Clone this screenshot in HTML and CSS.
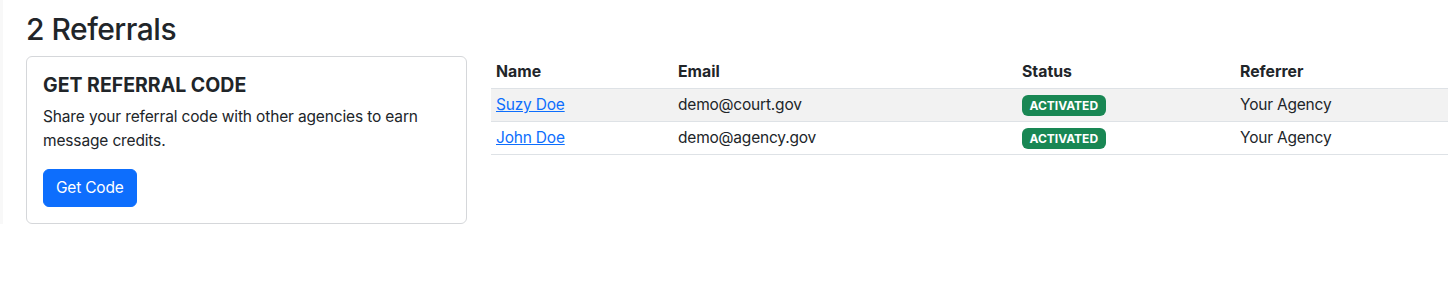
FILE: index.html
```html
<!DOCTYPE html>
<html lang="en">
<head>
<meta charset="utf-8">
<title>Referrals</title>
<link rel="stylesheet" href="styles.css">
</head>
<body>
<div class="page">
  <h2 class="title">2 Referrals</h2>
  <div class="layout">
    <div class="card">
      <h5 class="card-title">GET REFERRAL CODE</h5>
      <p class="card-text">Share your referral code with other agencies to earn message credits.</p>
      <button class="btn" type="button">Get Code</button>
    </div>
    <table class="table">
      <colgroup>
        <col class="c-name"><col class="c-email"><col class="c-status"><col class="c-ref">
      </colgroup>
      <thead>
        <tr><th>Name</th><th>Email</th><th>Status</th><th>Referrer</th></tr>
      </thead>
      <tbody>
        <tr class="striped">
          <td><a href="#">Suzy Doe</a></td>
          <td>demo@court.gov</td>
          <td><span class="badge">ACTIVATED</span></td>
          <td>Your Agency</td>
        </tr>
        <tr>
          <td><a href="#">John Doe</a></td>
          <td>demo@agency.gov</td>
          <td><span class="badge">ACTIVATED</span></td>
          <td>Your Agency</td>
        </tr>
      </tbody>
    </table>
  </div>
</div>
</body>
</html>
```

FILE: styles.css
```css
* { box-sizing: border-box; }
html, body {
  margin: 0;
  padding: 0;
  background: #fff;
}
body {
  font-family: Inter, "Liberation Sans", Arial, sans-serif;
  font-size: 15.5px;
  line-height: 24px;
  letter-spacing: -0.2px;
  color: #212529;
}
.page {
  border-left: 3px solid #f8f8f8;
  padding-left: 23px;
  padding-top: 11px;
}
.title {
  margin: 0 0 9px 0;
  font-size: 30px;
  font-weight: 500;
  line-height: 36px;
  letter-spacing: -0.5px;
}
.layout {
  display: flex;
  align-items: flex-start;
  gap: 24px;
}
.card {
  flex: 0 0 441px;
  border: 1px solid #d5d7da;
  border-radius: 6px;
  padding: 16px;
}
.card-title {
  margin: 0 0 8px 0;
  font-size: 19.5px;
  font-weight: 700;
  line-height: 24px;
  letter-spacing: 0;
}
.card-text {
  margin: 0 0 16px 0;
  font-size: 15.5px;
  line-height: 24px;
  letter-spacing: -0.15px;
}
.btn {
  display: block;
  font-family: inherit;
  font-size: 15.5px;
  line-height: 24px;
  letter-spacing: -0.2px;
  color: #fff;
  background: #0d6efd;
  border: 1px solid #0d6efd;
  border-radius: 6px;
  padding: 6px 12px;
  cursor: pointer;
}
.table {
  flex: 0 0 957px;
  border-collapse: collapse;
  table-layout: fixed;
  width: 957px;
}
.c-name { width: 182px; }
.c-email { width: 344px; }
.c-status { width: 218px; }
.c-ref { width: 213px; }
.table th, .table td {
  text-align: left;
  padding: 4px 5px;
  border-bottom: 1px solid #dee2e6;
  line-height: 24px;
  vertical-align: middle;
}
.table th {
  font-weight: 700;
  font-size: 15.8px;
  letter-spacing: 0;
}
.striped td { background: #f2f2f2; }
.table a { color: #0d6efd; text-decoration: underline; }
.badge {
  display: inline-block;
  background: #198754;
  color: #fff;
  font-size: 12px;
  font-weight: 700;
  line-height: 12px;
  letter-spacing: 0;
  padding: 4.5px 7.5px;
  border-radius: 6px;
  vertical-align: middle;
}
```
